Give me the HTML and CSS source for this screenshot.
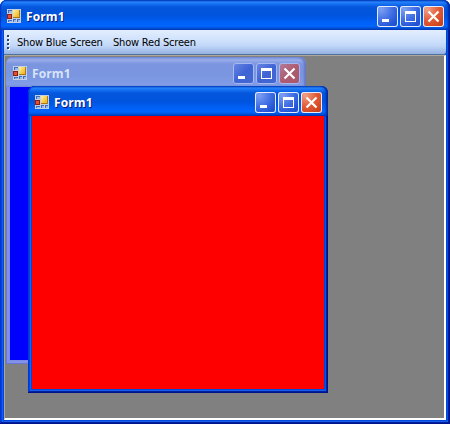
FILE: index.html
```html
<!DOCTYPE html>
<html lang="en">
<head>
<meta charset="utf-8">
<title>Form1</title>
<link rel="stylesheet" href="styles.css">
</head>
<body>
<svg class="defs" width="0" height="0" aria-hidden="true">
  <defs>
    <linearGradient id="gold" x1="0" y1="0" x2="1" y2="1"><stop offset="0" stop-color="#fff3a0"/><stop offset="1" stop-color="#eeb010"/></linearGradient>
    <symbol id="app" viewBox="0 0 14 14">
      <path fill="#c5cfe2" d="M0 0h14v14H0z"/>
      <path fill="#3f6cc0" d="M1 1h4v3H1zM1 11h4v2H1zM6 10h3v3H6zM10 10h3v3h-3z"/>
      <path fill="#9bb9ef" d="M2 2h3v2H2zM2 12h3v1H2zM7 11h2v2H7zM11 11h2v2h-2z"/>
      <path fill="#8e1d12" d="M0 5h5v5H0z"/><path fill="#e05038" d="M1 6h3v3H1z"/>
      <path fill="#a97818" d="M6 1h7v8H6z"/><path fill="url(#gold)" d="M6 1h6v7H6z"/>
    </symbol>
    <symbol id="min" viewBox="0 0 21 21"><path fill="#fff" d="M5 13h7v3H5z"/></symbol>
    <symbol id="max" viewBox="0 0 21 21"><path fill="#fff" fill-rule="evenodd" d="M5 5h11v11H5zM6 8v7h9V8z"/></symbol>
    <symbol id="close" viewBox="0 0 21 21"><path stroke="#fff" stroke-width="2.2" d="M5.5 5.5l10 10M15.5 5.5l-10 10"/></symbol>
  </defs>
</svg>
<div class="window main">
  <header class="titlebar">
    <svg class="app-icon"><use href="#app"/></svg>
    <span class="title">Form1</span>
    <div class="controls">
      <svg class="control"><use href="#min"/></svg>
      <svg class="control"><use href="#max"/></svg>
      <svg class="control close"><use href="#close"/></svg>
    </div>
  </header>
  <nav class="toolbar">
    <span class="grip"><i></i><i></i><i></i><i></i></span>
    <span class="tool blue-tool">Show Blue Screen</span>
    <span class="tool red-tool">Show Red Screen</span>
  </nav>
  <main class="workspace">
    <section class="window child inactive">
      <header class="titlebar">
        <svg class="app-icon"><use href="#app"/></svg>
        <span class="title">Form1</span>
        <div class="controls">
          <svg class="control"><use href="#min"/></svg>
          <svg class="control"><use href="#max"/></svg>
          <svg class="control close"><use href="#close"/></svg>
        </div>
      </header>
      <div class="content blue"></div>
    </section>
    <section class="window child active">
      <header class="titlebar">
        <svg class="app-icon"><use href="#app"/></svg>
        <span class="title">Form1</span>
        <div class="controls">
          <svg class="control"><use href="#min"/></svg>
          <svg class="control"><use href="#max"/></svg>
          <svg class="control close"><use href="#close"/></svg>
        </div>
      </header>
      <div class="content red"></div>
    </section>
  </main>
</div>
</body>
</html>
```
FILE: styles.css
```css
* { box-sizing: border-box; }
body { margin: 0; background: #fff; overflow: hidden; }
.defs { display: block; }
.window {
  display: flex;
  flex-direction: column;
  padding: 0 4px 4px;
  border-radius: 7px 7px 0 0;
  background: #0046d8;
  box-shadow: inset -1px -1px #00138c, inset 1px 0 #0831d9, inset -2px -2px #001ea0, inset 2px 0 #0046dc, inset 3px -3px #1660e8, inset -3px 0 #0855dd;
}
.main { width: 450px; height: 424px; }
.titlebar {
  flex: none;
  display: flex;
  align-items: center;
  height: 30px;
  margin: 0 -4px;
  padding: 3px 6px 0 7px;
  border-radius: 7px 7px 0 0;
  background: linear-gradient(#0645c4 0, #2483fa 2px, #1670f2 4px, #0457dc 7px, #0053dc 15px, #0060f6 22px, #0066ff 26px, #0052d8 28px, #0041bd 30px);
  box-shadow: inset -2px 0 2px #0029a5, inset 1px 0 1px #0035c5;
}
.app-icon { width: 14px; height: 14px; flex: none; margin-bottom: 1px; }
.title {
  width: 40px;
  margin-left: 5px;
  padding-top: 1px;
  color: #fff;
  font: bold 12px/16px "Open Sans", sans-serif;
  letter-spacing: .1px;
  text-shadow: 1px 1px #0a2080;
  white-space: nowrap;
}
.controls { display: flex; gap: 2px; margin-left: auto; }
.control {
  width: 21px;
  height: 21px;
  border-radius: 3px;
  background: radial-gradient(circle at 20% 15%, #7ea0f2 0, #4270e4 45%, #2355d5 75%, #194bd0 100%);
  box-shadow: inset 0 0 0 1px #e3ebfd;
}
.close { background: radial-gradient(circle at 20% 15%, #f0a287 0, #e35c37 45%, #d24820 75%, #bd3511 100%); }
.toolbar {
  flex: none;
  display: flex;
  align-items: center;
  height: 25px;
  padding-left: 3px;
  border-radius: 0 0 3px 0;
  background: linear-gradient(#e3eefe, #cadefb 50%, #c0d6f8 65%, #8eace0);
  box-shadow: inset 0 -1px #50719f;
}
.grip { display: flex; flex-direction: column; gap: 2px; width: 3px; margin-bottom: 2px; }
.grip i { width: 2px; height: 2px; background: #27417b; box-shadow: 1px 1px #fff; }
.tool {
  color: #000;
  font: 11px/16px "DejaVu Sans Condensed", "DejaVu Sans", sans-serif;
  letter-spacing: -.2px;
  white-space: nowrap;
}
.blue-tool { width: 96px; margin-left: 7px; }
.workspace {
  position: relative;
  flex: 1;
  background: #808080;
  border: solid;
  border-width: 1px 2px 2px 1px;
  border-color: #aca899 #fff #fff #aca899;
}
.child { position: absolute; width: 300px; height: 307px; }
.inactive { left: 1px; top: 1px; background: #7b8ae4; box-shadow: inset 0 0 0 1px #6b76d4, inset 0 0 0 3px #8192e8; }
.inactive .titlebar {
  background: linear-gradient(#7591de 0, #98ace9 3px, #7b95df 7px, #7b96e1 19px, #819de8 27px, #7a92dc 30px);
  box-shadow: inset -2px 0 2px #6577ca;
}
.inactive .title { color: #d8e4f8; text-shadow: none; }
.inactive .control { background: linear-gradient(135deg, #6b88e4, #3f64d5 50%, #4568ce); box-shadow: inset 0 0 0 1px #a6b8f0; }
.inactive .close { background: linear-gradient(135deg, #b17f9d, #af5b70 50%, #a6566c); }
.active { left: 23px; top: 30px; }
.content { flex: 1; }
.blue { background: #00f; }
.red { background: #f00; }
```
